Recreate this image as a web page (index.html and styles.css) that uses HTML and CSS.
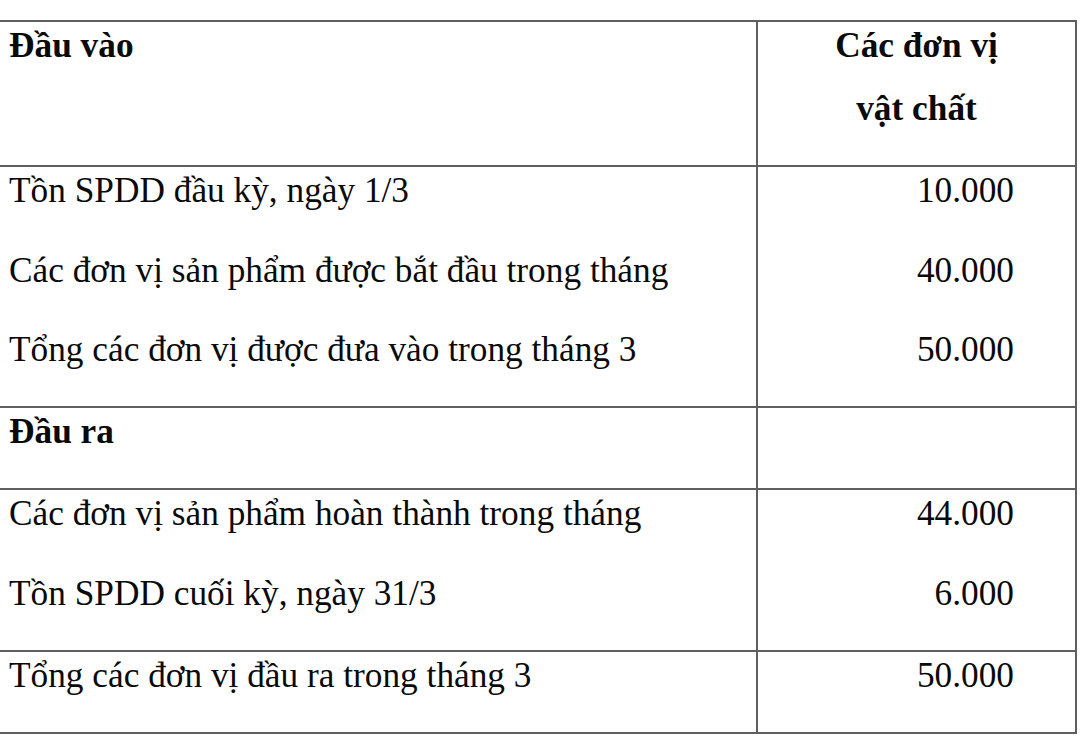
FILE: index.html
```html
<!DOCTYPE html>
<html lang="vi">
<head>
<meta charset="utf-8">
<title>Bảng đơn vị vật chất</title>
<link rel="stylesheet" href="styles.css">
</head>
<body>
<table class="units">
  <colgroup>
    <col class="col-label">
    <col class="col-value">
  </colgroup>
  <tr class="row-head">
    <td class="label"><p class="bold">Đầu vào</p></td>
    <td class="value head"><p class="bold">Các đơn vị<br>vật chất</p></td>
  </tr>
  <tr>
    <td class="label">
      <p>Tồn SPDD đầu kỳ, ngày 1/3</p>
      <p>Các đơn vị sản phẩm được bắt đầu trong tháng</p>
      <p>Tổng các đơn vị được đưa vào trong tháng 3</p>
    </td>
    <td class="value">
      <p>10.000</p>
      <p>40.000</p>
      <p>50.000</p>
    </td>
  </tr>
  <tr>
    <td class="label"><p class="bold">Đầu ra</p></td>
    <td class="value"><p>&nbsp;</p></td>
  </tr>
  <tr>
    <td class="label">
      <p>Các đơn vị sản phẩm hoàn thành trong tháng</p>
      <p>Tồn SPDD cuối kỳ, ngày 31/3</p>
    </td>
    <td class="value">
      <p>44.000</p>
      <p>6.000</p>
    </td>
  </tr>
  <tr>
    <td class="label"><p>Tổng các đơn vị đầu ra trong tháng 3</p></td>
    <td class="value"><p>50.000</p></td>
  </tr>
</table>
</body>
</html>
```

FILE: styles.css
```css
html, body {
  margin: 0;
  padding: 0;
  background: #ffffff;
}

body {
  font-family: "Liberation Serif", "Times New Roman", serif;
  font-size: 35.3px;
  color: #0a0a0a;
}

.units {
  border-collapse: collapse;
  table-layout: fixed;
  width: 1076px;
  margin-top: 20px;
}

.col-label {
  width: 757px;
}

.col-value {
  width: 319px;
}

.units td {
  border: 2px solid #5e5e5e;
  vertical-align: top;
  padding: 0 0 8.5px 0;
}

.units td.label {
  border-left: none;
  padding-left: 9px;
}

.units td.value {
  text-align: right;
  padding-right: 61px;
}

.units td.value.head {
  text-align: center;
  padding-right: 0;
}

.units p {
  margin: 0 0 16.5px 0;
  line-height: 63px;
  white-space: nowrap;
}

.units p:first-child {
  margin-top: -8px;
}

.bold {
  font-weight: bold;
}
```
